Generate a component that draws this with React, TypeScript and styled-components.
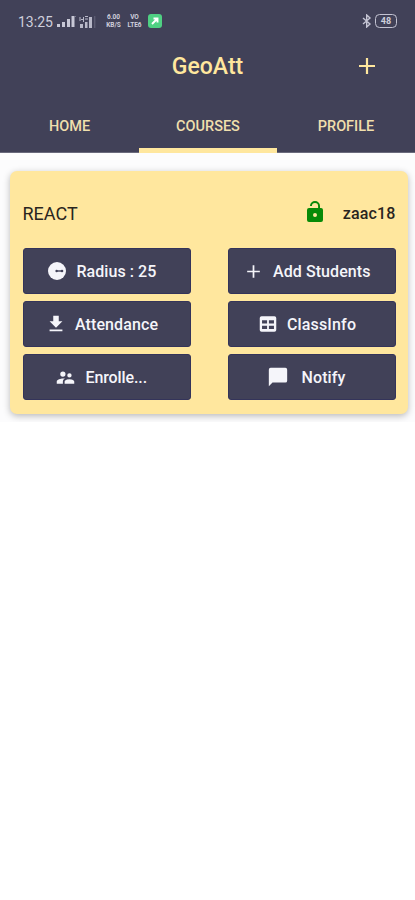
import React from "react";
import styled, { createGlobalStyle } from "styled-components";

const navy = "#414158";
const cream = "#ffe79e";

const GlobalStyle = createGlobalStyle`
  * { box-sizing: border-box; }
  html, body { margin: 0; background: #fff; }
  body { font-family: Roboto, "Liberation Sans", sans-serif; }
`;

const Screen = styled.div`
  width: 415px;
  height: 900px;
  background: #fff;
  overflow: hidden;
`;

const Header = styled.header`
  height: 153px;
  background: ${navy};
  border-bottom: 1px solid #6a6a7c;
  display: flex;
  flex-direction: column;
`;

const StatusBar = styled.div`
  height: 42px;
  padding: 0 18px;
  display: flex;
  align-items: center;
  color: #cfcfdc;
`;

const Clock = styled.span`
  width: 39px;
  font-size: 14px;
  line-height: 14px;
  white-space: nowrap;
  margin-top: 2px;
`;

const Tiny = styled.span<{ $width: number; $gap: number }>`
  width: ${(p) => p.$width}px;
  margin-left: ${(p) => p.$gap}px;
  display: flex;
  flex-direction: column;
  align-items: center;
  font-size: 6.5px;
  line-height: 8px;
  font-weight: 700;
  white-space: nowrap;
`;

const GreenBadge = styled.span`
  width: 14px;
  height: 14px;
  margin-left: 5px;
  border-radius: 3px;
  background: #4fd083;
  display: flex;
`;

const StatusRight = styled.div`
  margin-left: auto;
  display: flex;
  align-items: center;
  gap: 3px;
`;

const Battery = styled.span`
  width: 22px;
  height: 14px;
  border: 1.4px solid #c3c3d2;
  border-radius: 4.5px;
  font-size: 9px;
  line-height: 12px;
  font-weight: 700;
  text-align: center;
`;

const TitleBar = styled.div`
  height: 48px;
  display: grid;
  grid-template-columns: 1fr 100px 1fr;
  align-items: center;
  color: ${cream};
`;

const Title = styled.h1`
  grid-column: 2;
  margin: 1px 0 0;
  text-align: center;
  font-size: 23px;
  line-height: 28px;
  font-weight: 500;
  white-space: nowrap;
`;

const AddButton = styled.span`
  justify-self: end;
  margin-right: 40px;
  margin-top: -1px;
  display: flex;
`;

const Tabs = styled.nav`
  flex: 1;
  margin-bottom: -1px;
  display: grid;
  grid-template-columns: 139px 138px 138px;
`;

const Tab = styled.div<{ $active?: boolean }>`
  padding-top: 28px;
  text-align: center;
  font-size: 14.5px;
  line-height: 17px;
  font-weight: 500;
  color: #f0dfad;
  border-bottom: 5px solid ${(p) => (p.$active ? cream : "transparent")};
`;

const Content = styled.main`
  height: 269px;
  padding: 18px 6px 0 10px;
  background: #fcfcfd;
  overflow: hidden;
`;

const Card = styled.section`
  width: 398px;
  height: 243px;
  padding: 0 12.5px;
  border-radius: 7px;
  background: ${cream};
  box-shadow: 0 2px 7px rgba(0, 0, 0, 0.27);
`;

const CardHead = styled.div`
  height: 77px;
  padding-top: 8px;
  display: flex;
  align-items: center;
  color: #29251f;
`;

const CourseName = styled.span`
  font-size: 18px;
  line-height: 22px;
`;

const LockSlot = styled.span`
  margin-left: auto;
  width: 24px;
  height: 24px;
  margin-right: 16px;
  margin-top: -3px;
`;

const Owner = styled.span`
  font-size: 16px;
  line-height: 20px;
  font-weight: 500;
  letter-spacing: 0.15px;
`;

const ButtonGrid = styled.div`
  display: grid;
  grid-template-columns: 168px 168px;
  column-gap: 37px;
  row-gap: 7px;
`;

const ActionButton = styled.button<{ $inset: number }>`
  height: 46px;
  border: 1px solid #34345a;
  border-radius: 3px;
  padding: 0 0 0 ${(p) => p.$inset - 0.5}px;
  background: ${navy};
  color: #f5f5fa;
  display: flex;
  align-items: center;
  font-family: inherit;
`;

const IconSlot = styled.span<{ $width: number }>`
  width: ${(p) => p.$width}px;
  display: flex;
`;

const Label = styled.span<{ $spacing: number }>`
  font-size: 16px;
  line-height: 20px;
  font-weight: 500;
  letter-spacing: ${(p) => p.$spacing}px;
  white-space: nowrap;
  margin-top: 1px;
`;

type GlyphProps = { size: number; view?: string; children: React.ReactNode };
const Glyph = ({ size, view = "0 0 24 24", children }: GlyphProps) => (
  <svg width={size} height={size} viewBox={view} fill="currentColor">
    {children}
  </svg>
);

/* inset: icon start; slot: distance from icon start to label start */
const actions = [
  {
    label: "Radius : 25", inset: 25, slot: 28.5, spacing: 0.05,
    icon: (
      <Glyph size={18} view="0 0 18 18">
        <circle cx="9" cy="9" r="9" />
        <path d="M8 8.3h6v1.4H8z" fill={navy} />
        <circle cx="8.6" cy="9" r="1.2" fill={navy} />
        <circle cx="14" cy="9" r="1.3" fill={navy} />
      </Glyph>
    ),
  },
  {
    label: "Add Students", inset: 15.5, slot: 29.5, spacing: 0.08,
    icon: <Glyph size={19}><path d="M20 13.1h-6.9V20h-2.2v-6.9H4v-2.2h6.9V4h2.2v6.9H20z" /></Glyph>,
  },
  {
    label: "Attendance", inset: 21.5, slot: 30.5, spacing: 0.1,
    icon: <Glyph size={22}><path d="M19 9h-4V3H9v6H5l7 7 7-7zM5 18v2h14v-2H5z" /></Glyph>,
  },
  {
    label: "ClassInfo", inset: 29, slot: 30, spacing: 0.15,
    icon: (
      <Glyph size={22}>
        <path fillRule="evenodd" d="M5 3.5h14a2 2 0 0 1 2 2v13a2 2 0 0 1-2 2H5a2 2 0 0 1-2-2v-13a2 2 0 0 1 2-2zM5.5 8v3.5H11V8zm7.5 0v3.5h5.5V8zm-7.5 6v3.5H11V14zm7.5 0v3.5h5.5V14z" />
      </Glyph>
    ),
  },
  {
    label: "Enrolle...", inset: 32, slot: 30.5, spacing: -0.1,
    icon: (
      <Glyph size={21}>
        <path d="M16.5 12a2.5 2.5 0 1 0 0-5 2.5 2.5 0 0 0 0 5zM9 11a3 3 0 1 0 0-6 3 3 0 0 0 0 6zm7.5 3c-1.83 0-5.5.92-5.5 2.75V19h11v-2.25c0-1.83-3.67-2.75-5.5-2.75zM9 13c-2.33 0-7 1.17-7 3.5V19h7v-2.25c0-.85.33-2.34 2.37-3.47C10.5 13.1 9.66 13 9 13z" />
      </Glyph>
    ),
  },
  {
    label: "Notify", inset: 39, slot: 34.5, spacing: 0.1,
    icon: <Glyph size={22}><path d="M20 2H4a2 2 0 0 0-2 2v18l4-4h14a2 2 0 0 0 2-2V4a2 2 0 0 0-2-2z" /></Glyph>,
  },
];

export default function App() {
  return (
    <Screen>
      <GlobalStyle />
      <Header>
        <StatusBar>
          <Clock>13:25</Clock>
          <svg width="18" height="12" viewBox="0 0 18 12" fill="#c8c8d6">
            <path d="M0 9h3v3H0zM5 7h3v5H5zM10 4h3v8h-3zM14.5 1h3v11h-3z" />
          </svg>
          <svg width="22" height="13" viewBox="0 0 22 13" fill="#b9b9c9">
            <path d="M5 9h3v4H5zM10 7h2.5v6H10zM14 2h3v11h-3zM4.5 2h1v4h-1zM6 4h3v1H6zM8 2h1v5H8zM10 1h3v1h-3zM10 3.5h3v1h-3z" />
            <path d="M19.5 1h.7v12h-.7zM0 1h1v1H0z" opacity=".45" />
          </svg>
          <Tiny $width={17} $gap={8}><span>6.00</span><span>KB/S</span></Tiny>
          <Tiny $width={17} $gap={4}><span>VO</span><span>LTE6</span></Tiny>
          <GreenBadge>
            <svg width="14" height="14" viewBox="0 0 14 14" fill="none" stroke="#fff" strokeWidth="1.9">
              <path d="M4 10l5-5M5.5 4.5h4v4" />
            </svg>
          </GreenBadge>
          <StatusRight>
            <svg width="10" height="14" viewBox="0 0 10 14" fill="none" stroke="#c5c5d4" strokeWidth="1.4">
              <path d="M1 4l7 6-3.3 3V1L8 4l-7 6" />
            </svg>
            <Battery>48</Battery>
          </StatusRight>
        </StatusBar>
        <TitleBar>
          <Title>GeoAtt</Title>
          <AddButton>
            <svg width="16" height="16" viewBox="0 0 16 16" fill="none" stroke="currentColor" strokeWidth="2.2">
              <path d="M8 0v16M0 8h16" />
            </svg>
          </AddButton>
        </TitleBar>
        <Tabs>
          <Tab>HOME</Tab>
          <Tab $active>COURSES</Tab>
          <Tab>PROFILE</Tab>
        </Tabs>
      </Header>
      <Content>
        <Card>
          <CardHead>
            <CourseName>REACT</CourseName>
            <LockSlot>
              <svg width="24" height="24" viewBox="0 0 24 24" fill="#078a07">
                <path fillRule="evenodd" d="M12 17a2 2 0 1 0 0-4 2 2 0 0 0 0 4zm6-9h-1V6A5 5 0 0 0 7 6h1.9a3.1 3.1 0 0 1 6.2 0v2H6a2 2 0 0 0-2 2v10a2 2 0 0 0 2 2h12a2 2 0 0 0 2-2V10a2 2 0 0 0-2-2z" />
              </svg>
            </LockSlot>
            <Owner>zaac18</Owner>
          </CardHead>
          <ButtonGrid>
            {actions.map((a) => (
              <ActionButton key={a.label} $inset={a.inset}>
                <IconSlot $width={a.slot}>{a.icon}</IconSlot>
                <Label $spacing={a.spacing}>{a.label}</Label>
              </ActionButton>
            ))}
          </ButtonGrid>
        </Card>
      </Content>
    </Screen>
  );
}
